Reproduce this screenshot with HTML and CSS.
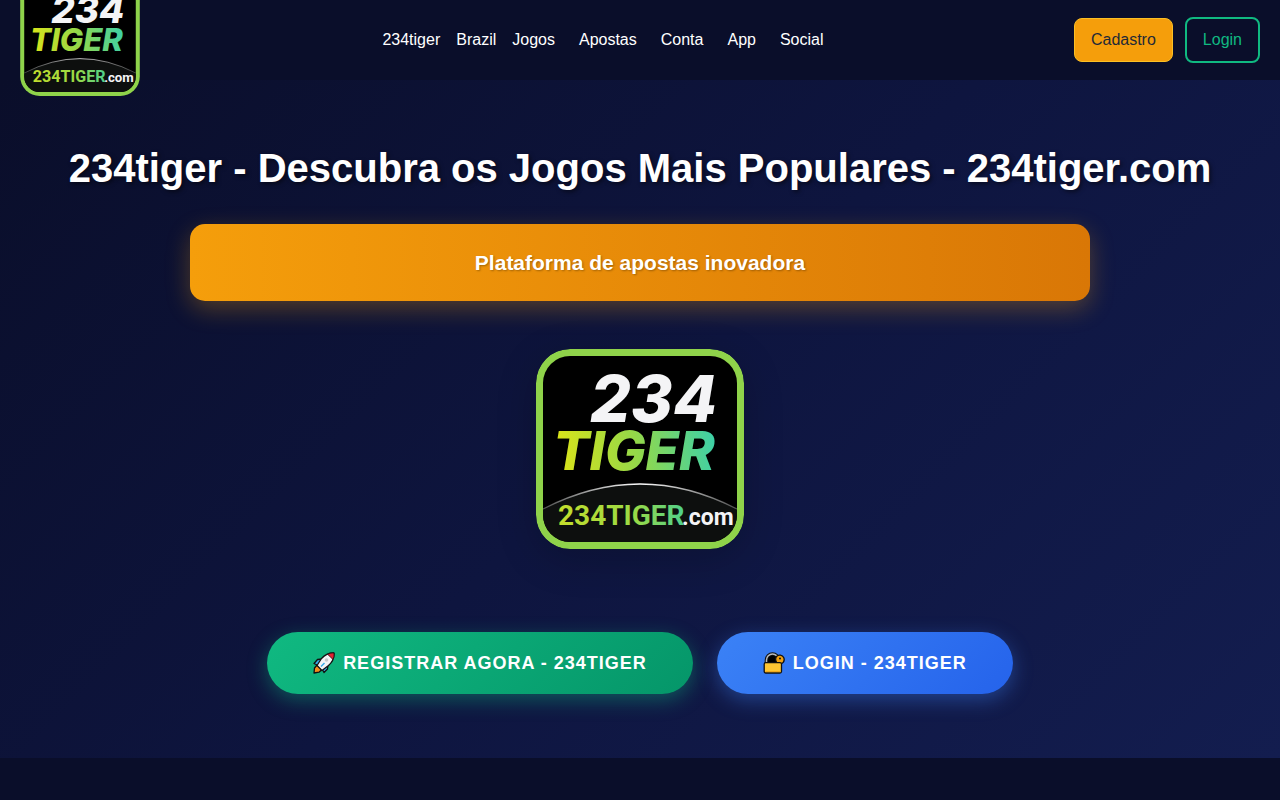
FILE: index.html
```html
<!DOCTYPE html>
<html lang="pt-BR">
<head>
  <meta charset="UTF-8">
  <meta name="viewport" content="width=device-width, initial-scale=1.0">
  <title>234tiger - Descubra os Jogos Mais Populares - 234tiger.com</title>
  <link rel="stylesheet" href="styles.css">
</head>
<body>
  <!-- shared logo -->
  <svg class="defs" width="0" height="0" aria-hidden="true">
    <defs>
      <linearGradient id="tiger" gradientUnits="userSpaceOnUse" x1="22" y1="100" x2="178" y2="80">
        <stop offset="0" stop-color="#d9e31a"/>
        <stop offset="0.5" stop-color="#93d84a"/>
        <stop offset="1" stop-color="#3dd0a8"/>
      </linearGradient>
      <linearGradient id="domain" gradientUnits="userSpaceOnUse" x1="22" y1="170" x2="148" y2="166">
        <stop offset="0" stop-color="#c3dd2c"/>
        <stop offset="0.6" stop-color="#9bda45"/>
        <stop offset="1" stop-color="#4fd08c"/>
      </linearGradient>
      <linearGradient id="horizon" x1="0" y1="0" x2="1" y2="0">
        <stop offset="0" stop-color="#fff" stop-opacity="0.3"/>
        <stop offset="0.5" stop-color="#fff"/>
        <stop offset="1" stop-color="#fff" stop-opacity="0.3"/>
      </linearGradient>
      <clipPath id="inner"><rect x="7" y="7" width="194" height="186" rx="27"/></clipPath>
    </defs>
    <symbol id="logo" viewBox="0 0 208 200">
      <rect width="208" height="200" rx="34" fill="#8fd34a"/>
      <rect x="7" y="7" width="194" height="186" rx="27" fill="#000"/>
      <path d="M7 160Q104 110 201 160V193H7z" fill="#0d0f0e" clip-path="url(#inner)"/>
      <path d="M7 160Q104 110 201 160" fill="none" stroke="url(#horizon)" stroke-width="1.3"/>
      <text class="logo-num" x="54" y="73">234</text>
      <text class="logo-name" x="17" y="121" fill="url(#tiger)">TIGER</text>
      <text class="logo-domain" x="22" y="176" fill="url(#domain)">234TIGER</text>
      <text class="logo-com" x="146" y="176">.com</text>
    </symbol>
  </svg>

  <header class="header">
    <a class="header-logo" href="#" aria-label="234tiger"><svg><use href="#logo"/></svg></a>
    <nav class="nav">
      <div class="nav-brand">
        <a href="#">234tiger</a>
        <a href="#">Brazil</a>
      </div>
      <ul class="nav-menu">
        <li><a href="#">Jogos</a></li>
        <li><a href="#">Apostas</a></li>
        <li><a href="#">Conta</a></li>
        <li><a href="#">App</a></li>
        <li><a href="#">Social</a></li>
      </ul>
    </nav>
    <div class="header-buttons">
      <button type="button" class="btn btn-register">Cadastro</button>
      <button type="button" class="btn btn-login">Login</button>
    </div>
  </header>

  <main>
    <section class="hero">
      <h1>234tiger - Descubra os Jogos Mais Populares - 234tiger.com</h1>
      <p class="hero-subtitle">Plataforma de apostas inovadora</p>
      <svg class="hero-logo" role="img" aria-label="234tiger.com"><use href="#logo"/></svg>
      <div class="cta">
        <a class="cta-button cta-register" href="#">
          <svg class="cta-icon" viewBox="0 0 22 22" aria-hidden="true">
            <g stroke="#111" stroke-width="1.3" stroke-linejoin="round">
              <path d="M4.500 12.500L1.500 16 1 21l5-.8L9.500 17z" fill="#f28c1c"/>
              <path d="M9.500 7L4.500 7.500 1 11.500l5 2.500z" fill="#35a9e8"/>
              <path d="M15 12.500L14.500 17 11 20.500 8.500 16z" fill="#35a9e8"/>
              <path d="M21 1c.4 5-1.600 9-5.500 12.500L9 18.500 4 13.500 8.500 6.500C12 2.500 16 .8 21 1z" fill="#f4f4f6"/>
              <path d="M21 1c.2 2.500 0 4.500-1 6.500L14.500 2.200C16.500 1.200 18.500.9 21 1z" fill="#e02232" stroke-width="0.8"/>
            </g>
            <circle cx="13.500" cy="8" r="1.800" fill="#c5c8cc"/>
            <path d="M8 14.500L11.500 11" stroke="#35a9e8" stroke-width="1.500"/>
          </svg>
          <span>REGISTRAR AGORA - 234TIGER</span>
        </a>
        <a class="cta-button cta-login" href="#">
          <svg class="cta-icon" viewBox="0 0 22 22" aria-hidden="true">
            <path d="M3.500 12V8a6 6 0 0 1 12 0v4z" fill="#000"/>
            <path d="M3.500 12V8a6 6 0 0 1 12 0v4" fill="none" stroke="#111" stroke-width="3.600"/>
            <path d="M3.500 12V8a6 6 0 0 1 12 0v4" fill="none" stroke="#b9bdc2" stroke-width="1.500"/>
            <path d="M13.500 4.500c2-2.300 6-1.600 7.200 1 1.100 2.700-.1 5.200-2.700 6.500V19h-3v-7.500c-2.500-1.500-3-4.800-1.500-7z" fill="#f0a010" stroke="#111" stroke-width="1.300"/>
            <circle cx="17" cy="6.500" r="1" fill="#111"/>
            <rect x="1.200" y="10.700" width="17.300" height="10.300" rx="1.500" fill="#ffc632" stroke="#111" stroke-width="1.300"/>
            <path d="M2.500 19.600h14.800" stroke="#eda51b"/>
          </svg>
          <span>LOGIN - 234TIGER</span>
        </a>
      </div>
    </section>
  </main>
</body>
</html>
```
FILE: styles.css
```css
* {
  margin: 0;
  padding: 0;
  box-sizing: border-box;
}

body {
  background: #0a0e2a;
  color: #fff;
  font-family: "Liberation Sans", Arial, sans-serif;
  font-size: 16px;
  line-height: 26px;
}

a {
  color: inherit;
  text-decoration: none;
}

.defs {
  position: absolute;
}

/* Header */
.header {
  display: flex;
  align-items: center;
  justify-content: space-between;
  height: 80px;
  padding: 0 20px;
  background: #0a0e2a;
}

.header-logo,
.header-logo svg {
  display: block;
  width: 120px;
  height: 115px;
}

/* the badge hangs below the bar */
.header-logo {
  position: relative;
  z-index: 1;
  margin-bottom: 3px;
}

.nav,
.nav-menu {
  display: flex;
  align-items: center;
  gap: 8px;
}

.nav-brand {
  display: flex;
  gap: 16px;
}

.nav-menu {
  list-style: none;
}

.nav-menu a {
  padding: 8px;
}

.header-buttons {
  display: flex;
  align-items: center;
  gap: 12px;
}

.btn {
  border-radius: 8px;
  font: inherit;
  cursor: pointer;
}

.btn-register {
  padding: 8px 16px;
  border: 1px solid #fbbf24;
  background: #f59e0b;
  color: #1f2937;
}

.btn-login {
  padding: 8px 16px;
  border: 2px solid #10b981;
  background: transparent;
  color: #10b981;
}

/* Hero */
.hero {
  display: flex;
  flex-direction: column;
  align-items: center;
  padding: 64px 20px;
  background: linear-gradient(135deg, #0a0e2a 0%, #0e153f 50%, #131d4f 100%);
  text-align: center;
}

.hero h1 {
  margin-bottom: 32px;
  font-size: 40px;
  line-height: 48px;
  text-shadow: 2px 2px 4px rgba(0, 0, 0, 0.5);
}

.hero-subtitle {
  width: 100%;
  max-width: 900px;
  margin-bottom: 48px;
  padding: 24px 32px;
  border-radius: 15px;
  background: linear-gradient(90deg, #f59e0b, #d97706);
  box-shadow: 0 8px 25px rgba(245, 158, 11, 0.3);
  font-size: 21px;
  font-weight: bold;
  line-height: 29px;
  text-shadow: 1px 1px 2px rgba(0, 0, 0, 0.3);
}

.hero-logo {
  width: 208px;
  height: 200px;
  margin-bottom: 83px;
  border-radius: 34px;
  box-shadow: 0 10px 40px rgba(0, 0, 0, 0.2);
}

.cta {
  display: flex;
  flex-wrap: wrap;
  justify-content: center;
  gap: 24px;
}

.cta-button {
  display: flex;
  align-items: center;
  gap: 8px;
  padding: 16px 46px;
  border-radius: 50px;
  font-size: 18px;
  font-weight: bold;
  line-height: 30px;
  letter-spacing: 1px;
}

.cta-icon {
  width: 22px;
  height: 22px;
}

.cta-register {
  background: linear-gradient(135deg, #10b981, #059669);
  box-shadow: 0 6px 20px rgba(16, 185, 129, 0.4);
}

.cta-login {
  background: linear-gradient(135deg, #3b82f6, #2563eb);
  box-shadow: 0 6px 20px rgba(59, 130, 246, 0.4);
}

/* Logo lettering */
.logo-num,
.logo-name {
  font-family: Inter, "Liberation Sans", sans-serif;
  font-style: italic;
  font-weight: 800;
}

.logo-num {
  fill: #f4f4f6;
  font-size: 64px;
}

.logo-name {
  font-size: 54px;
}

.logo-domain,
.logo-com {
  font-family: Roboto, "Liberation Sans", sans-serif;
  font-weight: 700;
}

.logo-domain {
  font-size: 28px;
}

.logo-com {
  fill: #f4f4f6;
  font-size: 23px;
}
```
